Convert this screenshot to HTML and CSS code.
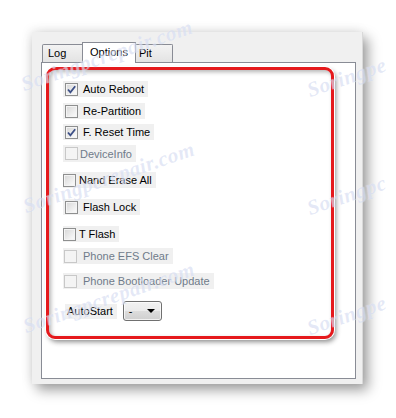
FILE: index.html
```html
<!DOCTYPE html>
<html>
<head>
<meta charset="utf-8">
<link rel="stylesheet" href="styles.css">
</head>
<body>
<div class="page">
  <div class="window">
    <div class="tabs">
      <div class="tab tab-log">Log</div>
      <div class="tab tab-options active">Options</div>
      <div class="tab tab-pit">Pit</div>
    </div>
    <div class="tabpage">
      <div class="frame">
        <div class="row">
          <span class="cb checked"><svg viewBox="0 0 13 13" width="13" height="13"><path d="M3 6.5 L5.4 9.3 L10.2 3.2" fill="none" stroke="#3c4f86" stroke-width="1.8"/></svg></span>
          <span class="label">Auto Reboot</span>
        </div>
        <div class="row m6">
          <span class="cb"></span>
          <span class="label">Re-Partition</span>
        </div>
        <div class="row m5">
          <span class="cb checked"><svg viewBox="0 0 13 13" width="13" height="13"><path d="M3 6.5 L5.4 9.3 L10.2 3.2" fill="none" stroke="#3c4f86" stroke-width="1.8"/></svg></span>
          <span class="label">F. Reset Time</span>
        </div>
        <div class="row m5 narrow disabled">
          <span class="cb"></span>
          <span class="label">DeviceInfo</span>
        </div>
        <div class="row m10 tight">
          <span class="cb"></span>
          <span class="label">Nand Erase All</span>
        </div>
        <div class="row m11">
          <span class="cb"></span>
          <span class="label">Flash Lock</span>
        </div>
        <div class="row m11 tight">
          <span class="cb"></span>
          <span class="label">T Flash</span>
        </div>
        <div class="row m6 wide disabled">
          <span class="cb"></span>
          <span class="label">Phone EFS Clear</span>
        </div>
        <div class="row m9 wide disabled">
          <span class="cb"></span>
          <span class="label">Phone Bootloader Update</span>
        </div>
        <div class="autorow">
          <span class="autolabel">AutoStart</span>
          <span class="combo"><span class="combo-text">-</span><span class="combo-arrow"></span></span>
        </div>
      </div>
    </div>
  </div>
  <div class="watermarks">
    <span class="wm wm1">Soringpcrepair.com</span>
    <span class="wm wm2">Soringpcrepair.com</span>
    <span class="wm wm3">Soringpcrepair.com</span>
    <span class="wm wm5">Soringpe</span>
    <span class="wm wm6">Soringpc</span>
    <span class="wm wm7">Soringpe</span>
  </div>
</div>
</body>
</html>
```

FILE: styles.css
```css
* { box-sizing: border-box; }

html, body {
  margin: 0;
  padding: 0;
  background: #ffffff;
  width: 396px;
  height: 418px;
  overflow: hidden;
  font-family: "Liberation Sans", Arial, sans-serif;
  font-size: 11px;
  color: #000;
}

.page {
  position: relative;
  width: 396px;
  height: 418px;
  padding: 32px 0 0 32px;
  overflow: hidden;
}

.window {
  width: 331px;
  height: 352px;
  background: #f0f0f0;
  border-right: 1px solid #d9d9d9;
  padding: 10px 0 0 9px;
  box-shadow: 5px 6px 12px rgba(0, 0, 0, 0.38), -2px -2px 10px rgba(0, 0, 0, 0.08);
}

.tabs {
  display: flex;
  align-items: flex-end;
  height: 20px;
  margin-left: 1px;
  position: relative;
  z-index: 2;
}

.tab {
  height: 18px;
  border: 1px solid #898c95;
  border-bottom: none;
  background: linear-gradient(#f3f3f3, #e3e3e3);
  line-height: 17px;
  font-size: 11px;
  white-space: nowrap;
}

.tab-log { width: 41px; padding-left: 5px; border-top-left-radius: 2px; }
.tab-options { width: 54px; padding-left: 7px; margin-left: -1px; }
.tab-pit { width: 38px; padding-left: 3px; margin-left: -1px; border-top-right-radius: 2px; }

.tab.active {
  height: 21px;
  margin-bottom: -1px;
  background: #ffffff;
  line-height: 19px;
  position: relative;
  z-index: 3;
}

.tabpage {
  width: 315px;
  height: 317px;
  border: 1px solid #898c95;
  background: #ffffff;
  padding: 4px 0 0 4px;
}

.frame {
  width: 288px;
  height: 272px;
  border: 3px solid #e5191c;
  border-radius: 9px;
  padding: 11px 0 0 14px;
  box-shadow: 0 0 0 1px #ffffff, 2px 3px 5px rgba(0, 0, 0, 0.45), inset 2px 2px 4px rgba(0, 0, 0, 0.3);
}

.row {
  display: flex;
  align-items: center;
  width: fit-content;
  height: 16px;
  background: #f0f0f0;
  padding: 0 4px 0 2px;
  gap: 5px;
}

.row.m5 { margin-top: 5px; }
.row.m6 { margin-top: 6px; }
.row.m9 { margin-top: 9px; }
.row.m10 { margin-top: 10px; }
.row.m11 { margin-top: 11px; }

.row.tight { padding-left: 0; gap: 3px; }
.row.narrow { gap: 2px; height: 17px; }
.row.wide { padding-left: 1px; gap: 6px; }

.cb {
  display: block;
  width: 13px;
  height: 13px;
  border: 1px solid #8e8f8f;
  background: linear-gradient(135deg, #d6d6d6, #f6f6f6 80%);
  box-shadow: inset 0 0 0 1px #f4f4f4;
  position: relative;
  flex: none;
}

.cb svg {
  position: absolute;
  left: -1px;
  top: -1px;
}

.label { white-space: nowrap; line-height: 14px; }

.row.disabled .label { color: #6f7b8a; }
.row.disabled .cb {
  border-color: #c8c8c8;
  background: #f4f4f4;
  box-shadow: none;
}

.autorow {
  display: flex;
  align-items: center;
  margin-top: 12px;
  height: 20px;
  padding-left: 2px;
}

.autolabel {
  background: #f0f0f0;
  height: 15px;
  line-height: 15px;
  padding: 0 4px 0 2px;
  white-space: nowrap;
}

.combo {
  display: flex;
  align-items: center;
  justify-content: space-between;
  width: 39px;
  height: 20px;
  margin-left: 6px;
  border: 1px solid #707070;
  border-radius: 3px;
  background: linear-gradient(#f2f2f2, #ebebeb 50%, #dddddd 50%, #cfcfcf);
  padding: 0 6px 0 5px;
  box-shadow: inset 0 0 0 1px rgba(255, 255, 255, 0.7);
}

.combo-text { line-height: 14px; }

.combo-arrow {
  width: 0;
  height: 0;
  border-left: 4px solid transparent;
  border-right: 4px solid transparent;
  border-top: 4px solid #000;
}

.watermarks {
  position: absolute;
  inset: 0;
  pointer-events: none;
  z-index: 10;
  overflow: hidden;
}

.wm {
  position: absolute;
  font-family: "Liberation Serif", serif;
  font-style: italic;
  font-weight: bold;
  font-size: 21px;
  color: rgba(160, 176, 225, 0.28);
  text-shadow: 0 0 1px rgba(255, 255, 255, 0.6);
  transform-origin: 0 100%;
  transform: rotate(-19deg);
  white-space: nowrap;
  letter-spacing: 0.5px;
}

.wm1 { left: 26px; top: 72px; }
.wm2 { left: 28px; top: 194px; }
.wm3 { left: 28px; top: 314px; }
.wm5 { left: 312px; top: 78px; }
.wm6 { left: 312px; top: 196px; }
.wm7 { left: 312px; top: 316px; }
```
